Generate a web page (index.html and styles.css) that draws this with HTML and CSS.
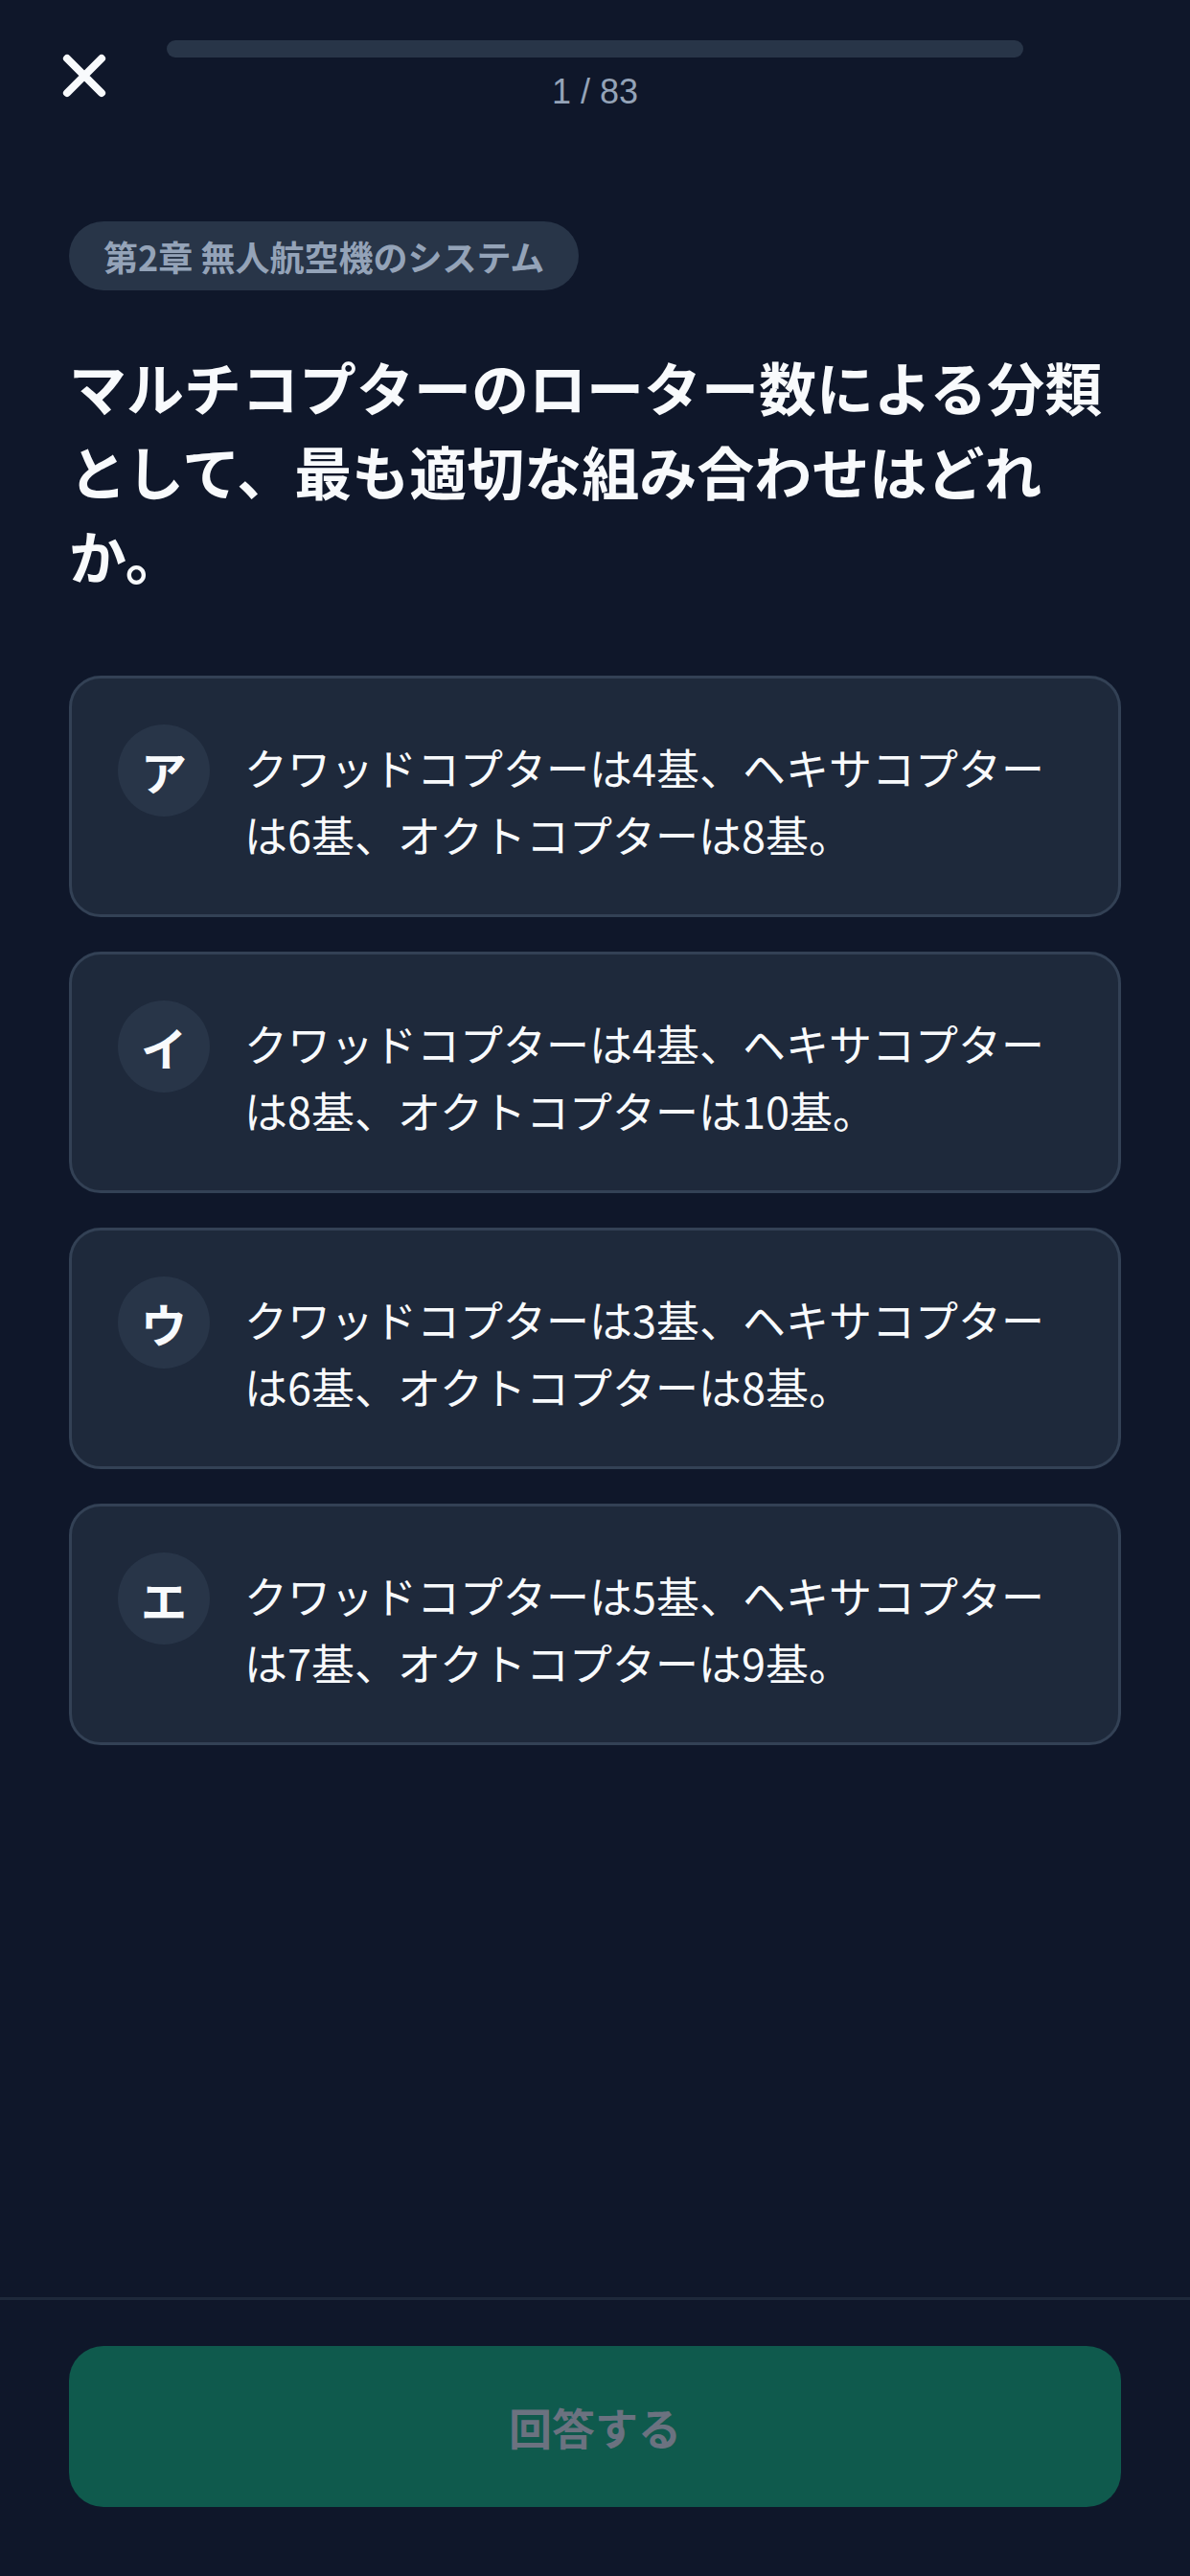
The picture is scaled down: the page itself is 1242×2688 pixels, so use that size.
FILE: index.html
```html
<!DOCTYPE html>
<html lang="ja">
<head>
  <meta charset="UTF-8" />
  <meta name="viewport" content="width=device-width, initial-scale=1.0"/>
  <title>問題 1 / 83</title>

  <link rel="stylesheet" href="styles.css">
</head>
<body>

  <header class="quiz-header">
    <button class="close-btn" aria-label="閉じる">
      <svg viewBox="0 0 24 24" width="72" height="72" fill="none" stroke="#f8fafc" stroke-width="2.7" stroke-linecap="round">
        <path d="M6 6 L18 18 M18 6 L6 18"/>
      </svg>
    </button>
    <div class="progress">
      <div class="progress-track"></div>
      <div class="progress-count">1 / 83</div>
    </div>
  </header>

  <main class="quiz">
    <span class="chapter">第2章 無人航空機のシステム</span>

    <h1 class="question">マルチコプターのローター数による分類として、最も適切な組み合わせはどれか。</h1>

    <div class="options">
      <div class="option">
        <span class="option-mark">ア</span>
        <p class="option-text">クワッドコプターは4基、ヘキサコプターは6基、オクトコプターは8基。</p>
      </div>
      <div class="option">
        <span class="option-mark">イ</span>
        <p class="option-text">クワッドコプターは4基、ヘキサコプターは8基、オクトコプターは10基。</p>
      </div>
      <div class="option">
        <span class="option-mark">ウ</span>
        <p class="option-text">クワッドコプターは3基、ヘキサコプターは6基、オクトコプターは8基。</p>
      </div>
      <div class="option">
        <span class="option-mark">エ</span>
        <p class="option-text">クワッドコプターは5基、ヘキサコプターは7基、オクトコプターは9基。</p>
      </div>
    </div>
  </main>

  <footer class="quiz-footer">
    <button class="answer-btn" disabled>回答する</button>
  </footer>

</body>
</html>
```

FILE: styles.css
```css
:root {
  --bg: #0f172a;
  --card: #1e293b;
  --line: #334155;
  --chip: #283548;
  --fg: #f8fafc;
  --muted: #94a3b8;
}

* {
  margin: 0;
  padding: 0;
  box-sizing: border-box;
}

html, body {
  height: 100%;
}

body {
  min-height: 100vh;
  display: flex;
  flex-direction: column;
  background-color: var(--bg);
  color: var(--fg);
  font-family: "Noto Sans CJK JP", "Noto Sans", sans-serif;
}

/* header */
.quiz-header {
  display: grid;
  grid-template-columns: 174px 1fr 174px;
  padding-top: 42px;
}

.close-btn {
  width: 72px;
  height: 72px;
  margin-left: 52px;
  margin-top: 1px;
  background: none;
  border: none;
  display: block;
}

.close-btn svg {
  display: block;
}

.progress {
  display: flex;
  flex-direction: column;
  align-items: center;
}

.progress-track {
  width: 100%;
  height: 18px;
  border-radius: 9px;
  background-color: var(--chip);
}

.progress-count {
  margin-top: 12px;
  font-family: "Liberation Sans", "Noto Sans", sans-serif;
  font-size: 36px;
  line-height: 48px;
  color: var(--muted);
}

/* question */
.quiz {
  flex: 1;
  padding: 111px 72px 0;
}

.chapter {
  display: inline-flex;
  align-items: center;
  height: 72px;
  padding: 0 36px;
  border-radius: 36px;
  background-color: var(--chip);
  color: var(--muted);
  font-size: 36px;
  font-weight: 700;
}

.question {
  margin: 56px 0 82px;
  font-size: 60px;
  line-height: 88px;
  font-weight: 700;
  color: var(--fg);
}

.options {
  display: flex;
  flex-direction: column;
  gap: 36px;
}

.option {
  display: flex;
  align-items: flex-start;
  gap: 36px;
  padding: 48px;
  border: 3px solid var(--line);
  border-radius: 33px;
  background-color: var(--card);
}

.option-mark {
  flex-shrink: 0;
  width: 96px;
  height: 96px;
  border-radius: 50%;
  background-color: var(--chip);
  display: flex;
  align-items: center;
  justify-content: center;
  font-size: 48px;
  font-weight: 700;
  color: var(--fg);
}

.option-text {
  flex: 1;
  padding-top: 10px;
  font-size: 45px;
  line-height: 70px;
  color: var(--fg);
}

/* footer */
.quiz-footer {
  border-top: 3px solid var(--card);
  padding: 48px 72px 72px;
}

.answer-btn {
  width: 100%;
  height: 168px;
  border: none;
  border-radius: 36px;
  background-color: #0f5a4d;
  color: #6b7280;
  font-family: "Noto Sans CJK JP", sans-serif;
  font-size: 45px;
  font-weight: 700;
}
```
